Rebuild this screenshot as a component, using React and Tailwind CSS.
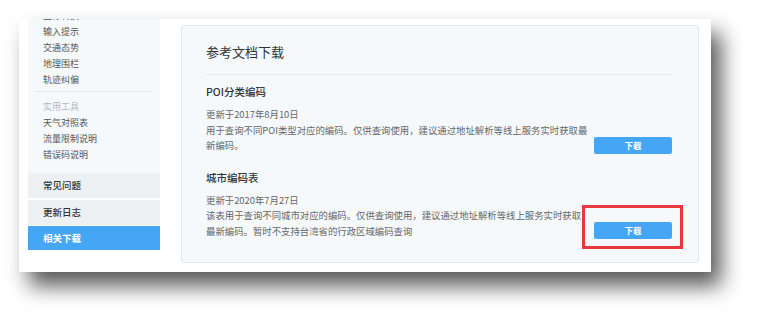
import React from "react";

const font = { fontFamily: '"Noto Sans CJK SC", "Noto Sans", sans-serif' };

const topLinks = ["坐标转换", "输入提示", "交通态势", "地理围栏", "轨迹纠偏"];
const toolLinks = ["天气对照表", "流量限制说明", "错误码说明"];

const docs = [
  {
    title: "POI分类编码",
    date: "更新于2017年8月10日",
    lines: [
      "用于查询不同POI类型对应的编码。仅供查询使用，建议通过地址解析等线上服务实时获取最",
      "新编码。",
    ],
  },
  {
    title: "城市编码表",
    date: "更新于2020年7月27日",
    lines: [
      "该表用于查询不同城市对应的编码。仅供查询使用，建议通过地址解析等线上服务实时获取",
      "最新编码。暂时不支持台湾省的行政区域编码查询",
    ],
    marked: true,
  },
];

const Sidebar = () => (
  <div className="w-[132px] shrink-0 flex flex-col">
    <div className="bg-[#f5f9fc] overflow-hidden pb-[10px]">
      <div className="-mt-[11px] pl-[15px] text-[9px] text-[#555]">
        {topLinks.map((t) => (
          <div key={t} className="h-4 leading-4">
            {t}
          </div>
        ))}
      </div>
      <div className="mx-[7px] mt-[3px] mb-[7px] h-px bg-[#e4e8ec]" />
      <div className="pl-[15px] text-[9px]">
        <div className="h-4 leading-4 text-[#b5b9bd]">实用工具</div>
        {toolLinks.map((t) => (
          <div key={t} className="h-4 leading-4 text-[#555]">
            {t}
          </div>
        ))}
      </div>
    </div>
    <div className="h-[25px] leading-[25px] pl-[15px] bg-[#edf1f4] text-[9.5px] font-medium text-[#333]">
      常见问题
    </div>
    <div className="mt-[2px] h-[25px] leading-[25px] pl-[15px] bg-[#edf1f4] text-[9.5px] font-medium text-[#333]">
      更新日志
    </div>
    <div className="mt-[1px] h-[24px] leading-[24px] pl-[15px] bg-[#44a6f5] text-[9.5px] font-bold text-white">
      相关下载
    </div>
  </div>
);

const DownloadButton = ({ marked }) => (
  <div className="relative shrink-0">
    <button className="w-[78px] h-[17px] rounded-[2px] bg-[#44a6f5] text-[8.5px] font-bold text-white leading-[17px]">
      下载
    </button>
    {marked && (
      <div className="absolute -left-[12px] -right-[11px] -top-[10px] -bottom-[10px] border-[3px] border-[#e8383d]" />
    )}
  </div>
);

const DocItem = ({ doc }) => (
  <div>
    <div className="text-[10.5px] leading-[14px] font-medium text-[#333]">
      {doc.title}
    </div>
    <div className="mt-[8px] flex items-end justify-between">
      <div className="text-[9.4px] leading-[15.5px] text-[#666] whitespace-nowrap">
        <div>{doc.date}</div>
        {doc.lines.map((l) => (
          <div key={l}>{l}</div>
        ))}
      </div>
      <DownloadButton marked={doc.marked} />
    </div>
  </div>
);

export default function App() {
  return (
    <div className="w-[757px] h-[319px] bg-white pt-[19px] pl-[19px]" style={font}>
      <div className="w-[692px] h-[253px] bg-white flex pl-[9px] pr-[12px] shadow-[10px_14px_20px_rgba(0,0,0,0.65)]">
        <Sidebar />
        <div className="ml-[21px] mt-[6px] mb-[9px] flex-1 rounded-[3px] border border-[#e3e8ec] bg-[#f5f9fc] pt-[17px] pl-[24px] pr-[26px]">
          <div className="text-[13px] leading-[18px] text-[#333]">参考文档下载</div>
          <div className="mt-[13px] h-px bg-[#e4e8ec]" />
          <div className="mt-[10px]">
            <DocItem doc={docs[0]} />
          </div>
          <div className="mt-[17px]">
            <DocItem doc={docs[1]} />
          </div>
        </div>
      </div>
    </div>
  );
}
